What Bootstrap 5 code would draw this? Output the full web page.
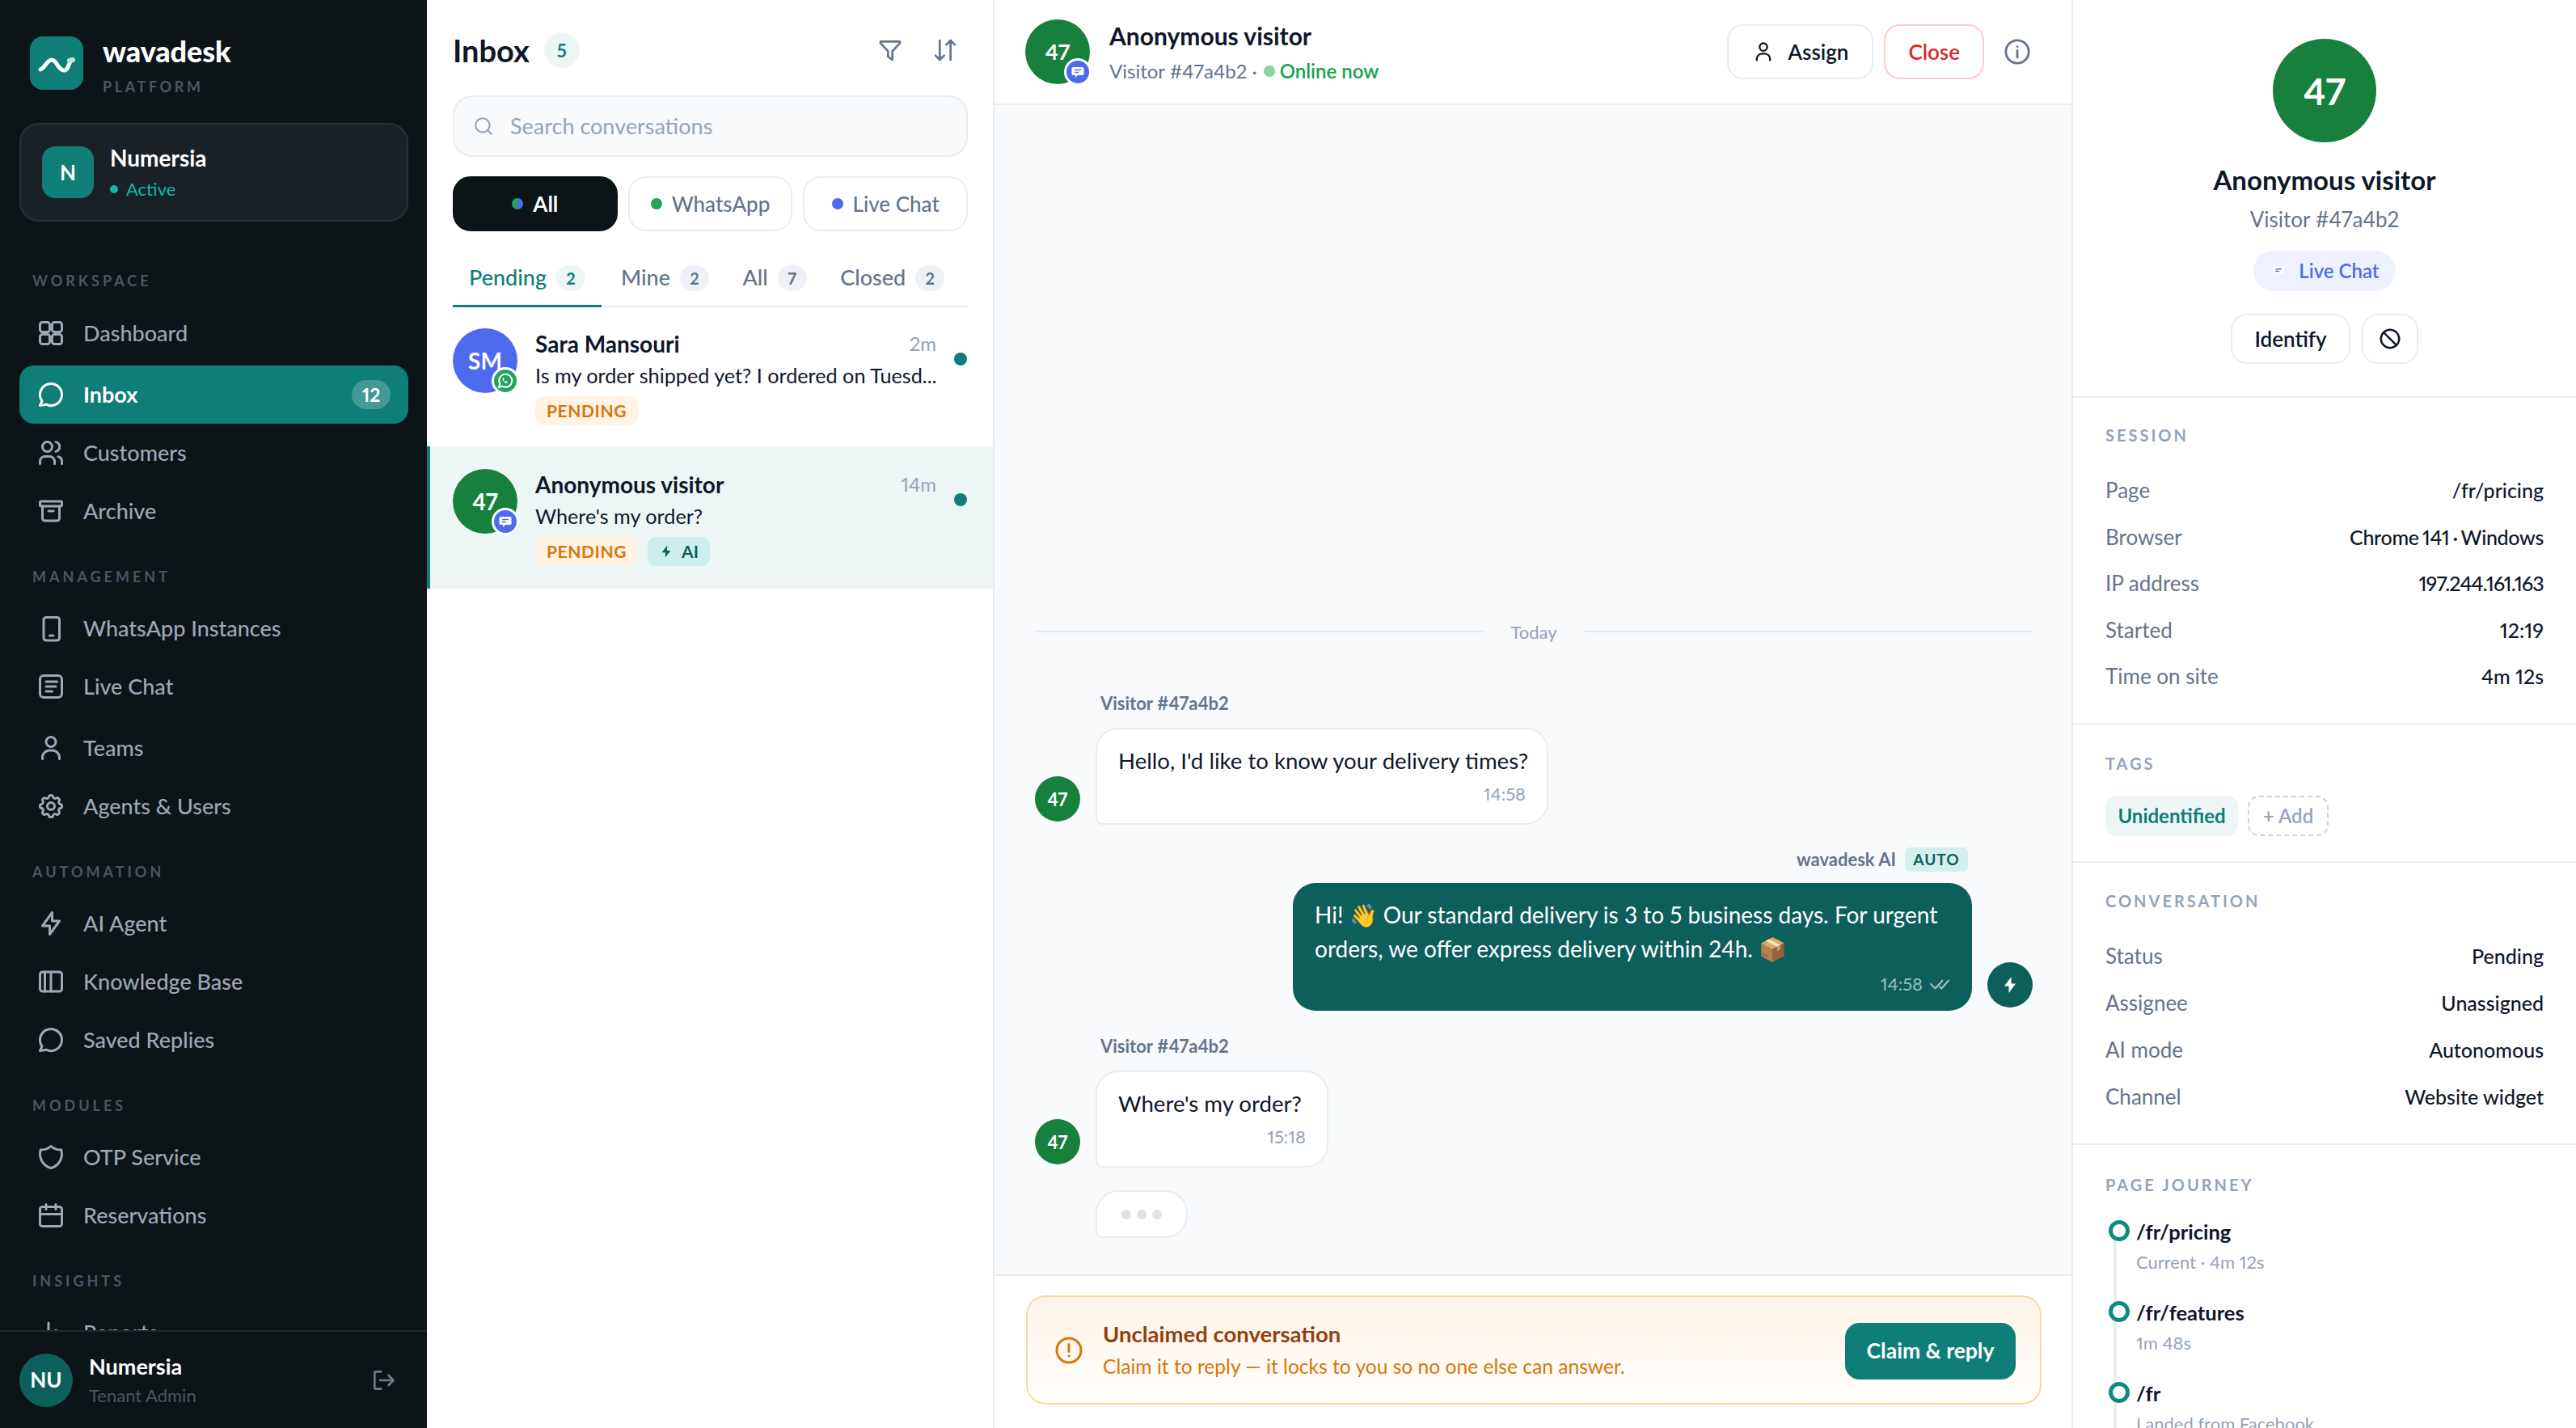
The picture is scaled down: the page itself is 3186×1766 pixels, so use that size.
<!DOCTYPE html>
<html lang="en">
<head>
<meta charset="utf-8">
<title>wavadesk</title>
<link href="https://cdn.jsdelivr.net/npm/bootstrap@5.3.0/dist/css/bootstrap.min.css" rel="stylesheet">
<style>
:root{--teal:#0f7d78;--deep:#0d5f5c;--ink:#0f172a;--slate:#64748b;--mute:#94a3b8;--line:#e8edf2;--mint:#edf6f5;--side:#0d1418}
html,body{height:100%;overflow:hidden}
body{font-family:"Lato","Liberation Sans",sans-serif;color:var(--ink);font-size:26px;background:#fff;font-variant-numeric:proportional-nums}
.shell{height:1766px}
svg{display:block;flex:none}
.ic{fill:none;stroke:currentColor;stroke-width:2;stroke-linecap:round;stroke-linejoin:round}
/* sidebar */
.side{width:528px;background:var(--side);flex:none}
.brand-row{padding:45px 37px 0;gap:24px;height:152px}
.logo-box{width:66px;height:66px;border-radius:16px;background:var(--teal)}
.brand-name{font-size:36px;font-weight:900;line-height:36px;color:#fff;letter-spacing:-.1px}
.brand-sub{font-size:18px;font-weight:700;letter-spacing:3.6px;color:#4b5563;line-height:22px;margin-top:15px}
.ws-box{margin:0 23px 0 24px;height:122px;border-radius:24px;background:#1a2126;border:2px solid #2a3036;padding:0 26px;gap:20px}
.ws-av{width:64px;height:64px;border-radius:16px;background:var(--teal);color:#fff;font-weight:700;font-size:26px}
.ws-name{font-size:28px;font-weight:700;color:#fff;line-height:34px}
.ws-stat{font-size:22px;color:#14b8a6;line-height:28px;margin-top:8px;gap:10px}
.ws-dot{width:10px;height:10px;border-radius:50%;background:#14b8a6}
.nav-scroll{min-height:0;overflow:hidden}
.nav-lab{font-size:18px;font-weight:700;letter-spacing:4px;color:#4b5563;line-height:20px;padding-left:40px;margin:35px 0 18px}
.nav-first{margin-top:63px;margin-bottom:19px}
.nav-row{height:72px;margin:0 23px 0 24px;padding:0 22px 0 21px;border-radius:18px;color:#9ca8b5;font-size:27px;gap:22px;text-decoration:none;font-weight:500}
.nav-row .nav-ic{width:36px;height:36px}
.nav-on{background:var(--teal);color:#fff;font-weight:700}
.nav-count{background:rgba(255,255,255,.22);color:#fff;font-size:23px;font-weight:700;border-radius:20px;width:48px;height:36px}
.side-foot{height:121px;border-top:2px solid #1f272d;padding:0 38px 0 24px;gap:20px}
.foot-av{width:66px;height:66px;background:var(--deep);color:#fff;font-weight:700;font-size:26px}
.foot-name{font-size:27px;font-weight:700;color:#fff;line-height:32px}
.foot-role{font-size:22px;color:#4b5563;line-height:28px;margin-top:6px}
.foot-out{color:#6b7a8a}
/* inbox list */
.list-pane{width:702px;flex:none;border-right:2px solid var(--line)}
.list-top{padding:0 31px 0 32px}
.list-head{height:118px;gap:18px;padding-top:6px}
.list-title{font-size:38px;font-weight:700;line-height:46px}
.count-5{width:44px;height:44px;background:var(--mint);color:var(--teal);font-size:22px;font-weight:700}
.head-ic{color:var(--slate);gap:36px;margin-right:12px}
.search-box{height:76px;border:2px solid var(--line);background:#f8fafc;border-radius:24px;padding:0 23px;gap:20px;color:var(--mute);font-size:27px}
.chan-row{gap:13px;margin-top:24px}
.chan{height:68px;border-radius:22px;border:2px solid var(--line);background:#fff;color:var(--slate);font-size:26px;gap:12px;flex:1 1 0;font-weight:500;padding:0}
.chan-on{background:var(--side);border-color:var(--side);color:#fff;font-weight:700}
.chan-dot{width:14px;height:14px;border-radius:50%}
.dot-wa{background:#22a559}.dot-lc{background:#4f6bed}
.dot-all{background:conic-gradient(#4f6bed 0 180deg,#22a559 180deg 360deg)}
.tab-row{height:94px;border-bottom:2px solid var(--line);padding-top:22px}
.tab-it{font-size:27px;color:var(--slate);gap:12px;height:70px;padding:0 20px;font-weight:500;margin-bottom:-2px;margin-left:1.5px;border-bottom:3px solid transparent}
.tab-it:first-child{margin-left:0}
.tab-it:nth-child(2){margin-left:4px}
.tab-on{color:var(--teal);border-bottom-color:var(--teal)}
.tab-n{width:36px;height:32px;border-radius:16px;background:#eef2f6;color:var(--slate);font-size:20px;font-weight:700}
.tab-on .tab-n{background:var(--mint);color:var(--teal)}
.conv{padding:26px 32px 26px 32px;gap:22px}
.conv-sel{background:var(--mint);border-left:4px solid var(--teal);padding:28px 32px 0 28px;height:176px}
.av-wrap{width:80px;height:80px;flex:none}
.av{width:80px;height:80px;color:#fff;font-weight:700;font-size:28px}
.av-blue{background:#4f6bed}.av-green{background:#16803c}
.mini{position:absolute;right:-2px;bottom:-2px;width:34px;height:34px;border-radius:50%;border:3px solid #fff}
.mini-wa{background:#22a559}.mini-lc{background:#4f6bed}
.conv-body{min-width:0;width:498px;padding-top:1px}
.conv-name{font-size:28px;font-weight:700;line-height:36px}
.conv-time{font-size:24px;color:var(--mute)}
.conv-prev{font-size:25.2px;line-height:36px;margin-top:3px;white-space:nowrap}
.conv-tags{gap:12px;margin-top:8px}
.tag-p{height:36px;padding:0 14px;border-radius:10px;background:#fff3e6;color:#d97706;font-size:21px;font-weight:700;letter-spacing:.6px}
.tag-ai{height:36px;padding:0 14px;border-radius:10px;background:#cdeeea;color:var(--deep);font-size:21px;font-weight:700;gap:10px}
.conv-dot{width:16px;height:16px;background:var(--teal);flex:none;margin-top:30px}
/* chat */
.chat-pane{min-width:0}
.chat-head{height:130px;border-bottom:2px solid var(--line);padding:0 50px 0 38px;flex:none}
.chat-av{width:80px;height:80px;color:#fff;font-weight:700;font-size:27px;background:#16803c}
.chat-name{font-size:30px;font-weight:700;line-height:36px}
.chat-sub{font-size:24px;line-height:30px;color:var(--slate);margin-top:11px;gap:6px}
.on-dot{width:14px;height:14px;border-radius:50%;background:#86d2a3;margin-left:2px}
.on-txt{color:#16a34a;font-weight:600}
.act{height:68px;border-radius:20px;border:2px solid var(--line);background:#fff;font-size:26px;font-weight:600;color:var(--ink);padding:0 29px;gap:16px}
.act-red{border-color:#fecaca;color:#dc2626;margin-left:13px;padding:0 28px}
.info-ic{color:var(--slate);margin-left:24px}
.chat-body{background:#f8fafc;padding:0 48px 45px 50px;min-height:0}
.day-line{height:30px;margin-bottom:60px;gap:34px;color:var(--mute);font-size:22px}
.day-rule{height:2px;background:#e2e8f0;flex:1 1 0}
.who{font-size:22px;font-weight:700;color:var(--slate);line-height:28px;margin:0 0 16px 81px}
.who-next{margin-top:30px}
.m-row{gap:19px}
.m-av{width:56px;height:56px;background:#16803c;color:#fff;font-size:22px;font-weight:700;margin-bottom:4px}
.m-in{background:#fff;border:2px solid var(--line);border-radius:28px 28px 28px 8px;padding:19px 26px 21px;font-size:27.6px;line-height:40px}
.wide-a{width:560px;white-space:nowrap}.wide-b{width:288px;white-space:nowrap}
.m-time{font-size:22px;color:var(--mute);line-height:30px;margin-top:6px;text-align:right}
.who-ai{font-size:22px;font-weight:700;color:var(--slate);line-height:30px;margin:28px 80px 14px 0;gap:11px}
.auto-tag{background:#d5f0ec;color:var(--deep);font-size:19px;font-weight:700;letter-spacing:1px;height:30px;width:78px;border-radius:6px}
.m-out{width:840px;background:var(--deep);color:#fff;border-radius:28px;padding:18px 27px;font-size:28px;line-height:42px;white-space:nowrap}
.m-meta{font-size:22px;line-height:30px;color:#9fbfbc;margin-top:8px;gap:8px}
.m-ai{width:56px;height:56px;background:var(--deep);color:#fff;margin-bottom:4px}
.typing{width:114px;height:59px;background:#fff;border:2px solid var(--line);border-radius:28px 28px 28px 8px;margin:28px 0 0 75px;gap:7px}
.typing i{width:12px;height:12px;border-radius:50%;background:#dde3ea}
.composer{height:190px;border-top:2px solid var(--line);padding:24px 37px 0 39px;flex:none}
.claim{height:135px;border:2px solid #fbd9a5;border-radius:24px;background:linear-gradient(180deg,#fff3e6,#fffefd);padding:0 30px 0 33px;gap:24px}
.claim-ic{color:#d97706}
.claim-t{font-size:27.5px;font-weight:700;color:#92400e;line-height:34px}
.claim-s{font-size:24.6px;color:#d97706;line-height:32px;margin-top:7px}
.claim-b{height:70px;width:211px;background:var(--teal);color:#fff;border:0;border-radius:18px;font-size:26.5px;font-weight:700;padding:0;margin-top:2px}
/* details */
.info-pane{width:624px;flex:none;border-left:2px solid var(--line);overflow:hidden}
.info-top{border-bottom:2px solid var(--line);padding-top:48px;flex:none;height:492px}
.big-av{width:128px;height:128px;background:#16803c;color:#fff;font-size:46px;font-weight:700}
.big-name{font-size:33px;font-weight:700;line-height:40px;margin-top:26px}
.big-sub{font-size:26px;color:var(--slate);line-height:32px;margin-top:13px}
.lc-pill{height:50px;border-radius:25px;background:#eef2ff;color:#4f6bed;font-size:24px;font-weight:600;margin-top:23px;padding:0 20px;gap:14px}
.info-btns{gap:14px;margin-top:28px}
.act-s{height:62px;border-radius:20px;border:2px solid var(--line);background:#fff;font-size:26px;font-weight:600;color:var(--ink);padding:0;width:148px}
.act-sq{width:70px}
.sec{border-bottom:2px solid var(--line);padding:34px 40px 0 40px;flex:none}
.sec-lab{font-size:20px;font-weight:700;letter-spacing:3px;color:var(--mute);line-height:24px}
.kv{font-size:25px;line-height:32px;height:32px;color:var(--slate)}
.kv span{font-size:26px}
.kv b{font-weight:500;color:var(--ink)}
.kv b.squeeze{letter-spacing:-.3px;word-spacing:-2px}
.kv b.nums{letter-spacing:-.8px}
.sess{height:404px}.sess .sec-lab{margin-bottom:40px}.sess .kv{margin-bottom:25.5px}
.tags-s{height:171px;padding-top:36px}
.tag-u{height:50px;width:164px;border-radius:14px;background:var(--mint);color:var(--teal);font-size:24px;font-weight:700}
.tag-add{height:50px;width:100px;border-radius:14px;border:2px dashed #cbd5e1;color:var(--mute);font-size:24px;font-weight:600;background:transparent}
.tags-row{gap:12px;margin-top:28px}
.conv-s{height:349px;padding-top:35px}.conv-s .sec-lab{margin-bottom:40px}.conv-s .kv{margin-bottom:26px}
.jour{padding:37px 40px 0 40px;flex:none}
.j-item{padding-left:38px;height:100px}
.j-item::before{content:"";position:absolute;left:10px;top:14px;bottom:-14px;width:4px;background:var(--line)}
.j-dot{position:absolute;left:4px;top:0;width:26px;height:26px;border:5px solid #0f8a7e;border-radius:50%;background:#fff}
.j-p{font-size:25.5px;font-weight:700;line-height:28px}
.j-s{font-size:22px;color:var(--mute);line-height:30px;margin-top:9px}
.j-list{margin-top:32px}
</style>
</head>
<body>
<svg width="0" height="0" class="position-absolute">
<defs>
<symbol id="i-chat" viewBox="0 0 24 24"><path d="M3 21l1.65-3.8a9 9 0 1 1 3.4 2.9L3 21"/></symbol>
<symbol id="i-dash" viewBox="0 0 24 24"><rect x="3" y="3" width="8" height="8" rx="2"/><rect x="13" y="3" width="8" height="8" rx="2"/><rect x="3" y="13" width="8" height="8" rx="2"/><rect x="13" y="13" width="8" height="8" rx="2"/></symbol>
<symbol id="i-users" viewBox="0 0 24 24"><circle cx="9" cy="7" r="4"/><path d="M3 21v-2a4 4 0 0 1 4-4h4a4 4 0 0 1 4 4v2"/><path d="M16 3.1a4 4 0 0 1 0 7.8"/><path d="M21 21v-2a4 4 0 0 0-3-3.85"/></symbol>
<symbol id="i-arch" viewBox="0 0 24 24"><rect x="3" y="4" width="18" height="4" rx="1"/><path d="M5 8v10a2 2 0 0 0 2 2h10a2 2 0 0 0 2-2V8"/><path d="M10 12h4"/></symbol>
<symbol id="i-phone" viewBox="0 0 24 24"><rect x="6" y="3" width="13" height="19" rx="2"/><path d="M11 18h3"/></symbol>
<symbol id="i-doc" viewBox="0 0 24 24"><rect x="3" y="3" width="18" height="18" rx="3"/><path d="M8 8h9M8 12h8M8 16h5"/></symbol>
<symbol id="i-user" viewBox="0 0 24 24"><circle cx="12" cy="7" r="4"/><path d="M5 21v-2a6 6 0 0 1 6-5h2a6 6 0 0 1 6 5v2"/></symbol>
<symbol id="i-gear" viewBox="0 0 24 24"><path d="M10.3 4.3c.4-1.8 3-1.8 3.4 0a1.7 1.7 0 0 0 2.6 1.1c1.5-.9 3.3.8 2.4 2.4a1.7 1.7 0 0 0 1 2.5c1.8.4 1.8 3 0 3.4a1.7 1.7 0 0 0-1 2.6c.9 1.5-.9 3.3-2.4 2.4a1.7 1.7 0 0 0-2.6 1c-.4 1.8-3 1.8-3.4 0a1.7 1.7 0 0 0-2.6-1c-1.5.9-3.3-.9-2.4-2.4a1.7 1.7 0 0 0-1-2.6c-1.8-.4-1.8-3 0-3.4a1.7 1.7 0 0 0 1-2.5c-.9-1.6.9-3.3 2.4-2.4 1 .6 2.3.1 2.6-1.1z"/><circle cx="12" cy="12" r="3"/></symbol>
<symbol id="i-bolt" viewBox="0 0 24 24"><path d="M13 3v7h6l-8 11v-7H5l8-11"/></symbol>
<symbol id="i-book" viewBox="0 0 24 24"><rect x="3" y="4" width="18" height="16" rx="2"/><path d="M12 4v16M7 4v16"/></symbol>
<symbol id="i-shield" viewBox="0 0 24 24"><path d="M12 3a12 12 0 0 0 8.5 3A12 12 0 0 1 12 21 12 12 0 0 1 3.5 6 12 12 0 0 0 12 3"/></symbol>
<symbol id="i-cal" viewBox="0 0 24 24"><rect x="3" y="5" width="18" height="16" rx="2"/><path d="M16 3v4M8 3v4M3 11h18"/></symbol>
<symbol id="i-bars" viewBox="0 0 24 24"><path d="M4 20v-6M10 20V4M16 20v-10M21 20v-4"/></symbol>
<symbol id="i-out" viewBox="0 0 24 24"><path d="M10 4H5a1 1 0 0 0-1 1v14a1 1 0 0 0 1 1h5"/><path d="M9 12h12M17 7.5l4.5 4.5-4.5 4.5"/></symbol>
<symbol id="i-filter" viewBox="0 0 24 24"><path d="M3 4h18v1.5l-7 7.5v8l-4-3v-5L3 5.5z"/></symbol>
<symbol id="i-sort" viewBox="0 0 24 24"><path d="M7 3v18M3 17l4 4 4-4M17 21V3M13 7l4-4 4 4"/></symbol>
<symbol id="i-search" viewBox="0 0 24 24"><circle cx="11" cy="11" r="8"/><path d="M21 21l-4.3-4.3"/></symbol>
<symbol id="i-info" viewBox="0 0 24 24"><circle cx="12" cy="12" r="10"/><path d="M12 11v6M12 7.5v.01"/></symbol>
<symbol id="i-ban" viewBox="0 0 24 24"><circle cx="12" cy="12" r="9"/><path d="M5.7 5.7l12.6 12.6"/></symbol>
<symbol id="i-alert" viewBox="0 0 24 24"><circle cx="12" cy="12" r="10"/><path d="M12 7v6M12 16.5v.01"/></symbol>
<symbol id="i-check" viewBox="0 0 24 24"><path d="M2 12l5 5L15 8M12 15l2 2 8-9"/></symbol>
<symbol id="i-wa" viewBox="0 0 24 24"><path d="M4 20l1.3-4.3a8 8 0 1 1 3 3L4 20z" fill="none" stroke="#fff" stroke-width="2"/><path d="M9 8.500c-.8.8-.6 2.200.7 3.900 1.500 1.900 3 2.700 4.200 2.300.7-.2 1-.8 1-1.400l-2-1-.8.800c-.9-.4-1.800-1.300-2.200-2.200l.8-.8-1-2z" fill="#fff"/></symbol>
<symbol id="i-lc" viewBox="0 0 24 24"><path d="M6 6h12a1.500 1.500 0 0 1 1.500 1.500v7A1.500 1.500 0 0 1 18 16h-6l-3 3v-3H6a1.500 1.500 0 0 1-1.500-1.500v-7A1.500 1.500 0 0 1 6 6z" fill="#fff"/><path d="M8 9.500h8M8 12.500h5" stroke="#4f6bed" stroke-width="1.500" fill="none"/></symbol>
<symbol id="i-zapf" viewBox="0 0 24 24"><path d="M13.500 2v8.500H19L10.500 22v-8.500H5z" fill="currentColor"/></symbol>
</defs>
</svg>

<div class="shell d-flex">
  <aside class="side d-flex flex-column">
    <div class="brand-row d-flex align-items-start flex-shrink-0">
      <div class="logo-box d-flex align-items-center justify-content-center">
        <svg width="50" height="30" viewBox="0 0 50 30" fill="none" stroke-linecap="round"><path d="M5 23c6-2 8-12 14-12s8 13 15 13 5-12 11-13" stroke="#fff" stroke-width="5"/><path d="M41 12l4-1" stroke="#bfe5e0" stroke-width="6"/></svg>
      </div>
      <div><div class="brand-name">wavadesk</div><div class="brand-sub">PLATFORM</div></div>
    </div>
    <div class="ws-box d-flex align-items-center flex-shrink-0">
      <div class="ws-av d-flex align-items-center justify-content-center">N</div>
      <div><div class="ws-name">Numersia</div><div class="ws-stat d-flex align-items-center"><span class="ws-dot"></span>Active</div></div>
    </div>
    <nav class="nav-scroll flex-grow-1">
      <div class="nav-lab nav-first">WORKSPACE</div>
      <a class="nav-row d-flex align-items-center"><svg class="nav-ic ic"><use href="#i-dash"/></svg>Dashboard</a>
      <a class="nav-row nav-on d-flex align-items-center mt-1"><svg class="nav-ic ic"><use href="#i-chat"/></svg><span class="flex-grow-1">Inbox</span><span class="nav-count d-flex align-items-center justify-content-center">12</span></a>
      <a class="nav-row d-flex align-items-center"><svg class="nav-ic ic"><use href="#i-users"/></svg>Customers</a>
      <a class="nav-row d-flex align-items-center"><svg class="nav-ic ic"><use href="#i-arch"/></svg>Archive</a>
      <div class="nav-lab">MANAGEMENT</div>
      <a class="nav-row d-flex align-items-center"><svg class="nav-ic ic"><use href="#i-phone"/></svg>WhatsApp Instances</a>
      <a class="nav-row d-flex align-items-center"><svg class="nav-ic ic"><use href="#i-doc"/></svg>Live Chat</a>
      <a class="nav-row d-flex align-items-center mt-1"><svg class="nav-ic ic"><use href="#i-user"/></svg>Teams</a>
      <a class="nav-row d-flex align-items-center"><svg class="nav-ic ic"><use href="#i-gear"/></svg>Agents &amp; Users</a>
      <div class="nav-lab">AUTOMATION</div>
      <a class="nav-row d-flex align-items-center"><svg class="nav-ic ic"><use href="#i-bolt"/></svg>AI Agent</a>
      <a class="nav-row d-flex align-items-center"><svg class="nav-ic ic"><use href="#i-book"/></svg>Knowledge Base</a>
      <a class="nav-row d-flex align-items-center"><svg class="nav-ic ic"><use href="#i-chat"/></svg>Saved Replies</a>
      <div class="nav-lab">MODULES</div>
      <a class="nav-row d-flex align-items-center"><svg class="nav-ic ic"><use href="#i-shield"/></svg>OTP Service</a>
      <a class="nav-row d-flex align-items-center"><svg class="nav-ic ic"><use href="#i-cal"/></svg>Reservations</a>
      <div class="nav-lab">INSIGHTS</div>
      <a class="nav-row d-flex align-items-center"><svg class="nav-ic ic"><use href="#i-bars"/></svg>Reports</a>
    </nav>
    <div class="side-foot d-flex align-items-center flex-shrink-0">
      <div class="foot-av rounded-circle d-flex align-items-center justify-content-center">NU</div>
      <div class="flex-grow-1"><div class="foot-name">Numersia</div><div class="foot-role">Tenant Admin</div></div>
      <svg class="foot-out ic" width="32" height="32"><use href="#i-out"/></svg>
    </div>
  </aside>

  <section class="list-pane d-flex flex-column">
    <div class="list-top">
      <div class="list-head d-flex align-items-center">
        <div class="list-title">Inbox</div>
        <div class="count-5 rounded-circle d-flex align-items-center justify-content-center">5</div>
        <div class="ms-auto d-flex head-ic"><svg class="ic" width="32" height="32"><use href="#i-filter"/></svg><svg class="ic" width="32" height="32"><use href="#i-sort"/></svg></div>
      </div>
      <div class="search-box d-flex align-items-center"><svg class="ic" width="26" height="26"><use href="#i-search"/></svg>Search conversations</div>
      <div class="chan-row d-flex">
        <button class="chan chan-on btn d-flex align-items-center justify-content-center"><span class="chan-dot dot-all"></span>All</button>
        <button class="chan btn d-flex align-items-center justify-content-center"><span class="chan-dot dot-wa"></span>WhatsApp</button>
        <button class="chan btn d-flex align-items-center justify-content-center"><span class="chan-dot dot-lc"></span>Live Chat</button>
      </div>
      <div class="tab-row d-flex align-items-end">
        <div class="tab-it tab-on d-flex align-items-center">Pending<span class="tab-n d-flex align-items-center justify-content-center">2</span></div>
        <div class="tab-it d-flex align-items-center">Mine<span class="tab-n d-flex align-items-center justify-content-center">2</span></div>
        <div class="tab-it d-flex align-items-center">All<span class="tab-n d-flex align-items-center justify-content-center">7</span></div>
        <div class="tab-it d-flex align-items-center">Closed<span class="tab-n d-flex align-items-center justify-content-center">2</span></div>
      </div>
    </div>
    <div class="conv d-flex">
      <div class="av-wrap position-relative">
        <div class="av av-blue rounded-circle d-flex align-items-center justify-content-center">SM</div>
        <div class="mini mini-wa d-flex align-items-center justify-content-center"><svg width="24" height="24"><use href="#i-wa"/></svg></div>
      </div>
      <div class="conv-body">
        <div class="d-flex justify-content-between align-items-center"><div class="conv-name">Sara Mansouri</div><div class="conv-time">2m</div></div>
        <div class="conv-prev">Is my order shipped yet? I ordered on Tuesd...</div>
        <div class="conv-tags d-flex"><span class="tag-p d-flex align-items-center">PENDING</span></div>
      </div>
      <div class="conv-dot rounded-circle"></div>
    </div>
    <div class="conv conv-sel d-flex">
      <div class="av-wrap position-relative">
        <div class="av av-green rounded-circle d-flex align-items-center justify-content-center">47</div>
        <div class="mini mini-lc d-flex align-items-center justify-content-center"><svg width="24" height="24"><use href="#i-lc"/></svg></div>
      </div>
      <div class="conv-body">
        <div class="d-flex justify-content-between align-items-center"><div class="conv-name">Anonymous visitor</div><div class="conv-time">14m</div></div>
        <div class="conv-prev">Where's my order?</div>
        <div class="conv-tags d-flex"><span class="tag-p d-flex align-items-center">PENDING</span><span class="tag-ai d-flex align-items-center"><svg width="18" height="22"><use href="#i-zapf"/></svg>AI</span></div>
      </div>
      <div class="conv-dot rounded-circle"></div>
    </div>
  </section>

  <main class="chat-pane flex-grow-1 d-flex flex-column">
    <header class="chat-head d-flex align-items-center">
      <div class="av-wrap position-relative">
        <div class="chat-av rounded-circle d-flex align-items-center justify-content-center">47</div>
        <div class="mini mini-lc d-flex align-items-center justify-content-center"><svg width="24" height="24"><use href="#i-lc"/></svg></div>
      </div>
      <div class="ms-4 flex-grow-1">
        <div class="chat-name">Anonymous visitor</div>
        <div class="chat-sub d-flex align-items-center">Visitor #47a4b2 ·<span class="on-dot"></span><span class="on-txt">Online now</span></div>
      </div>
      <button class="act btn d-flex align-items-center"><svg class="ic" width="28" height="28"><use href="#i-user"/></svg>Assign</button>
      <button class="act act-red btn d-flex align-items-center">Close</button>
      <svg class="ic info-ic" width="34" height="34"><use href="#i-info"/></svg>
    </header>
    <div class="chat-body flex-grow-1 d-flex flex-column justify-content-end">
      <div class="day-line d-flex align-items-center"><span class="day-rule"></span>Today<span class="day-rule"></span></div>
      <div class="who">Visitor #47a4b2</div>
      <div class="m-row d-flex align-items-end">
        <div class="m-av rounded-circle d-flex align-items-center justify-content-center">47</div>
        <div class="m-in wide-a">Hello, I'd like to know your delivery times?<div class="m-time">14:58</div></div>
      </div>
      <div class="who-ai d-flex align-items-center justify-content-end">wavadesk AI<span class="auto-tag d-flex align-items-center justify-content-center">AUTO</span></div>
      <div class="m-row d-flex align-items-end justify-content-end">
        <div class="m-out">Hi! 👋 Our standard delivery is 3 to 5 business days. For urgent<br>orders, we offer express delivery within 24h. 📦
          <div class="m-meta d-flex align-items-center justify-content-end">14:58<svg class="ic" width="26" height="26"><use href="#i-check"/></svg></div>
        </div>
        <div class="m-ai rounded-circle d-flex align-items-center justify-content-center"><svg width="24" height="24"><use href="#i-zapf"/></svg></div>
      </div>
      <div class="who who-next">Visitor #47a4b2</div>
      <div class="m-row d-flex align-items-end">
        <div class="m-av rounded-circle d-flex align-items-center justify-content-center">47</div>
        <div class="m-in wide-b">Where's my order?<div class="m-time">15:18</div></div>
      </div>
      <div class="typing d-flex align-items-center justify-content-center"><i></i><i></i><i></i></div>
    </div>
    <div class="composer">
      <div class="claim d-flex align-items-center">
        <svg class="claim-ic ic" width="36" height="36"><use href="#i-alert"/></svg>
        <div class="flex-grow-1"><div class="claim-t">Unclaimed conversation</div><div class="claim-s">Claim it to reply — it locks to you so no one else can answer.</div></div>
        <button class="claim-b btn">Claim &amp; reply</button>
      </div>
    </div>
  </main>

  <aside class="info-pane d-flex flex-column">
    <div class="info-top d-flex flex-column align-items-center">
      <div class="big-av rounded-circle d-flex align-items-center justify-content-center">47</div>
      <div class="big-name">Anonymous visitor</div>
      <div class="big-sub">Visitor #47a4b2</div>
      <div class="lc-pill d-flex align-items-center"><svg width="22" height="22"><use href="#i-lc"/></svg>Live Chat</div>
      <div class="info-btns d-flex"><button class="act-s btn">Identify</button><button class="act-s act-sq btn d-flex align-items-center justify-content-center"><svg class="ic" width="30" height="30"><use href="#i-ban"/></svg></button></div>
    </div>
    <div class="sec sess">
      <div class="sec-lab">SESSION</div>
      <div class="kv d-flex justify-content-between"><span>Page</span><b>/fr/pricing</b></div>
      <div class="kv d-flex justify-content-between"><span>Browser</span><b class="squeeze">Chrome 141 · Windows</b></div>
      <div class="kv d-flex justify-content-between"><span>IP address</span><b class="nums">197.244.161.163</b></div>
      <div class="kv d-flex justify-content-between"><span>Started</span><b>12:19</b></div>
      <div class="kv d-flex justify-content-between"><span>Time on site</span><b>4m 12s</b></div>
    </div>
    <div class="sec tags-s">
      <div class="sec-lab">TAGS</div>
      <div class="tags-row d-flex"><span class="tag-u d-flex align-items-center justify-content-center">Unidentified</span><span class="tag-add d-flex align-items-center justify-content-center">+ Add</span></div>
    </div>
    <div class="sec conv-s">
      <div class="sec-lab">CONVERSATION</div>
      <div class="kv d-flex justify-content-between"><span>Status</span><b>Pending</b></div>
      <div class="kv d-flex justify-content-between"><span>Assignee</span><b>Unassigned</b></div>
      <div class="kv d-flex justify-content-between"><span>AI mode</span><b>Autonomous</b></div>
      <div class="kv d-flex justify-content-between"><span>Channel</span><b>Website widget</b></div>
    </div>
    <div class="jour">
      <div class="sec-lab">PAGE JOURNEY</div>
      <div class="j-list">
        <div class="j-item position-relative"><span class="j-dot"></span><div class="j-p">/fr/pricing</div><div class="j-s">Current · 4m 12s</div></div>
        <div class="j-item position-relative"><span class="j-dot"></span><div class="j-p">/fr/features</div><div class="j-s">1m 48s</div></div>
        <div class="j-item position-relative"><span class="j-dot"></span><div class="j-p">/fr</div><div class="j-s">Landed from Facebook</div></div>
      </div>
    </div>
  </aside>
</div>
<script src="https://cdn.jsdelivr.net/npm/bootstrap@5.3.0/dist/js/bootstrap.bundle.min.js"></script>
</body>
</html>
